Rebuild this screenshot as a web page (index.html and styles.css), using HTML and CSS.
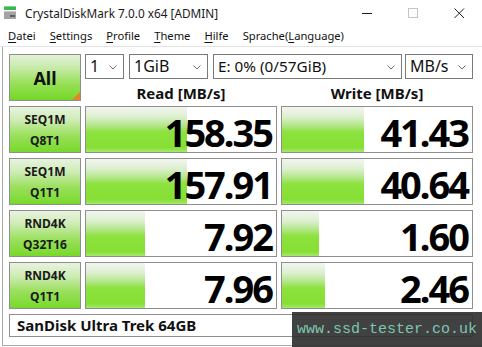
FILE: index.html
```html
<!DOCTYPE html>
<html>
<head>
<meta charset="utf-8">
<link rel="stylesheet" href="styles.css">
</head>
<body>
<div class="window">
  <div class="titlebar">
    <svg class="appicon" width="13" height="13" viewBox="0 0 13 13">
      <rect x="0" y="0" width="12" height="4" fill="#3fb54f"/>
      <rect x="0" y="0" width="12" height="1" fill="#7fd88a"/>
      <rect x="0" y="5" width="12" height="8" fill="#a3a3a3"/>
      <rect x="0" y="5" width="12" height="1" fill="#c8c8c8"/>
      <rect x="6" y="9" width="5" height="2" fill="#5e5e5e"/>
    </svg>
    <span class="title">CrystalDiskMark 7.0.0 x64 [ADMIN]</span>
    <div class="controls">
      <span class="ctl"><svg width="11" height="11" viewBox="0 0 11 11"><line x1="0" y1="5.5" x2="10" y2="5.5" stroke="#1e1e1e" stroke-width="1"/></svg></span>
      <span class="ctl"><svg width="11" height="11" viewBox="0 0 11 11"><rect x="0.5" y="0.5" width="9" height="9" fill="none" stroke="#c4c4c4" stroke-width="1"/></svg></span>
      <span class="ctl"><svg width="11" height="11" viewBox="0 0 11 11"><path d="M0.5 0.5 L10 10 M10 0.5 L0.5 10" stroke="#1e1e1e" stroke-width="1" fill="none"/></svg></span>
    </div>
  </div>
  <div class="menubar">
    <span class="mi"><u>D</u>atei</span>
    <span class="mi"><u>S</u>ettings</span>
    <span class="mi"><u>P</u>rofile</span>
    <span class="mi"><u>T</u>heme</span>
    <span class="mi"><u>H</u>ilfe</span>
    <span class="mi">Sprache(<u>L</u>anguage)</span>
  </div>
  <div class="main">
    <div class="grid">
      <div class="allbtn">All</div>
      <div class="top">
        <div class="selects">
          <div class="sel s1"><span>1</span><svg class="chev" width="8" height="5" viewBox="0 0 8 5"><path d="M0.5 0.5 L4 4 L7.5 0.5" fill="none" stroke="#6e6e6e" stroke-width="1"/></svg></div>
          <div class="sel s2"><span>1GiB</span><svg class="chev" width="8" height="5" viewBox="0 0 8 5"><path d="M0.5 0.5 L4 4 L7.5 0.5" fill="none" stroke="#6e6e6e" stroke-width="1"/></svg></div>
          <div class="sel s3"><span>E: 0% (0/57GiB)</span><svg class="chev" width="8" height="5" viewBox="0 0 8 5"><path d="M0.5 0.5 L4 4 L7.5 0.5" fill="none" stroke="#6e6e6e" stroke-width="1"/></svg></div>
          <div class="sel s4"><span>MB/s</span><svg class="chev" width="8" height="5" viewBox="0 0 8 5"><path d="M0.5 0.5 L4 4 L7.5 0.5" fill="none" stroke="#6e6e6e" stroke-width="1"/></svg></div>
        </div>
        <div class="heads">
          <div class="head">Read [MB/s]</div>
          <div class="head">Write [MB/s]</div>
        </div>
      </div>

      <div class="lab"><span>SEQ1M</span><span>Q8T1</span></div>
      <div class="val" style="background-size:101px 100%">158.35</div>
      <div class="val" style="background-size:82px 100%">41.43</div>

      <div class="lab"><span>SEQ1M</span><span>Q1T1</span></div>
      <div class="val" style="background-size:101px 100%">157.91</div>
      <div class="val" style="background-size:82px 100%">40.64</div>

      <div class="lab"><span>RND4K</span><span>Q32T16</span></div>
      <div class="val" style="background-size:59px 100%">7.92</div>
      <div class="val" style="background-size:37px 100%">1.60</div>

      <div class="lab"><span>RND4K</span><span>Q1T1</span></div>
      <div class="val" style="background-size:59px 100%">7.96</div>
      <div class="val" style="background-size:43px 100%">2.46</div>

      <div class="name">SanDisk Ultra Trek 64GB</div>
    </div>
  </div>
  <div class="watermark">www.ssd-tester.co.uk</div>
</div>
</body>
</html>
```

FILE: styles.css
```css
html, body {
  margin: 0;
  padding: 0;
  background: #ffffff;
}

.window {
  position: relative;
  width: 482px;
  height: 347px;
  overflow: hidden;
  background: #ffffff;
  font-family: "Noto Sans", "DejaVu Sans", sans-serif;
  color: #000;
}

/* Title bar */
.titlebar {
  height: 23px;
  display: flex;
  align-items: center;
  padding-left: 4px;
}

.appicon {
  display: block;
  margin-top: 1px;
}

.title {
  margin-left: 8px;
  font-size: 11.8px;
  color: #1a1a1a;
  line-height: 23px;
  padding-top: 3px;
}

.controls {
  margin-left: auto;
  display: flex;
  height: 23px;
}

.ctl {
  width: 46px;
  display: flex;
  align-items: center;
  justify-content: center;
  padding-top: 4px;
}

/* Menu bar */
.menubar {
  height: 23px;
  border-bottom: 1px solid #e4e4e4;
  display: flex;
  align-items: center;
  gap: 14px;
  padding-left: 8px;
  font-size: 11.2px;
  color: #111;
}

.mi {
  line-height: 23px;
  padding-top: 2px;
}

.mi u {
  text-decoration-thickness: 1px;
  text-underline-offset: 2px;
}

/* Main area */
.main {
  margin-left: 2px;
  border-left: 1px solid #a8a8a8;
  border-bottom: 1px solid #a8a8a8;
  padding: 7px 0 8px 6px;
}

.grid {
  display: grid;
  grid-template-columns: 72px 192px 192px;
  grid-template-rows: 47px 47px 47px 47px 47px 23px;
  column-gap: 4px;
  row-gap: 5px;
}

.allbtn {
  position: relative;
  box-sizing: border-box;
  border: 1px solid #8e8e8e;
  background: linear-gradient(to bottom, #e2f1d6 0%, #c6eaa6 30%, #98e05a 62%, #74d826 100%);
  display: flex;
  align-items: center;
  justify-content: center;
  font-weight: 700;
  font-size: 18px;
  color: #111;
}

.allbtn::after {
  content: "";
  position: absolute;
  right: 0;
  bottom: 0;
  width: 0;
  height: 0;
  border-left: 8px solid transparent;
  border-bottom: 8px solid #e8832a;
}

.top {
  grid-column: 2 / 4;
  display: flex;
  flex-direction: column;
}

.selects {
  display: flex;
  height: 25px;
}

.sel {
  box-sizing: border-box;
  height: 25px;
  border: 1px solid #7a7a7a;
  background: #fff;
  display: flex;
  align-items: center;
  justify-content: space-between;
  padding: 0 6px 0 4px;
  font-size: 16px;
  color: #111;
}

.sel span {
  line-height: 23px;
}

.s3 span {
  font-size: 15.3px;
}

.chev {
  display: block;
  margin-top: 1px;
}

.s1 { width: 39px; margin-right: 5px; }
.s2 { width: 79px; margin-right: 5px; }
.s3 { width: 189px; margin-right: 3px; }
.s4 { width: 68px; }

.heads {
  display: grid;
  grid-template-columns: 192px 192px;
  column-gap: 4px;
  height: 22px;
}

.head {
  text-align: center;
  font-weight: 700;
  font-size: 15px;
  line-height: 16px;
  padding-top: 6px;
  color: #111;
}

.lab {
  box-sizing: border-box;
  border: 1px solid #8e8e8e;
  background: linear-gradient(to bottom, #e8f3e0 0%, #cdebb2 30%, #9be05e 62%, #78d92a 100%);
  display: flex;
  flex-direction: column;
  align-items: center;
  justify-content: center;
  font-weight: 700;
  font-size: 12px;
  line-height: 21px;
  color: #1a1a1a;
}

.val {
  box-sizing: border-box;
  border: 1px solid #8e8e8e;
  background-color: #fff;
  background-image: linear-gradient(to bottom, #f3f5f1 0%, #dcefcf 22%, #b2e686 42%, #8de23f 55%, #86df34 90%, #a6e86c 100%);
  background-repeat: no-repeat;
  background-position: 0 0;
  text-align: right;
  font-weight: 700;
  font-size: 38px;
  letter-spacing: -2px;
  line-height: 39px;
  padding: 6px 4px 0 0;
  color: #000;
}

.name {
  grid-column: 1 / 4;
  box-sizing: border-box;
  border: 1px solid #8e8e8e;
  background: #fff;
  font-weight: 700;
  font-size: 15px;
  line-height: 21px;
  padding-left: 7px;
  color: #111;
}

.watermark {
  position: absolute;
  left: 292px;
  top: 312px;
  width: 190px;
  height: 35px;
  box-sizing: border-box;
  background: rgba(44, 44, 44, 0.9);
  color: #7cc6b2;
  font-family: "Liberation Mono", "DejaVu Sans Mono", monospace;
  font-size: 15px;
  line-height: 35px;
  padding-left: 5px;
  white-space: nowrap;
}
```
